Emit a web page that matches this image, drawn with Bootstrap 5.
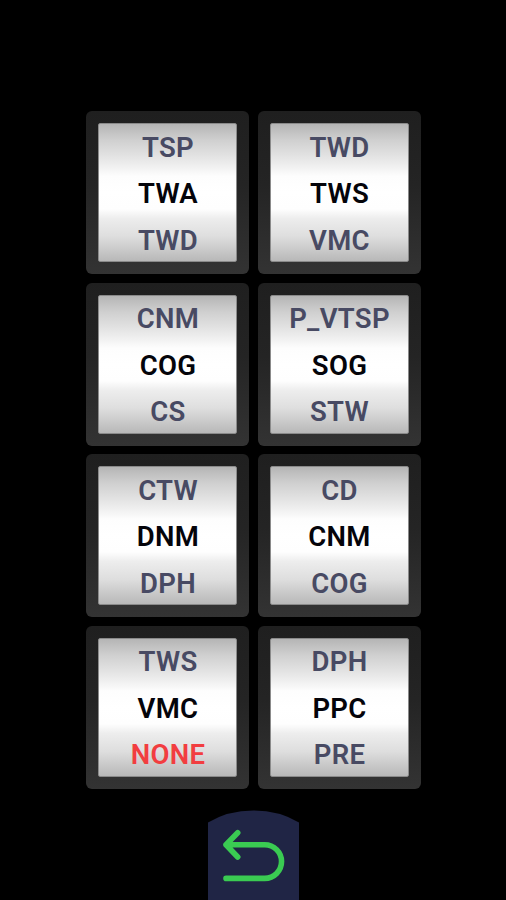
<!DOCTYPE html>
<html lang="en">
<head>
<meta charset="utf-8">
<meta name="viewport" content="width=device-width, initial-scale=1">
<title>Display selection</title>
<link href="https://cdn.jsdelivr.net/npm/bootstrap@5.3.0/dist/css/bootstrap.min.css" rel="stylesheet">
<style>
body { background: #000; font-family: Roboto, "Liberation Sans", sans-serif; }
.screen { height: 900px; padding-top: 111px; }
.wheels { display: grid; grid-template-columns: 163px 163px; gap: 8.5px; margin-left: 86px; }
.wheel { height: 163px; padding: 12px; border-radius: 6px; background: linear-gradient(#1f1f1f, #242424 45%, #333); }
.face { height: 139px; padding: .5px 0 0 1px; border: 1px solid #8a8a8a; border-radius: 2px;
  background: linear-gradient(#b5b5b5 0%, #d0d0d0 12%, #e2e2e2 23%, #f0f0f0 31%, #fdfdfd 38%, #fff 50%, #fefefe 62%, #ededed 69%, #dedede 82%, #b8b8b8 100%); }
.opt { height: 46.5px; line-height: 46.5px; font-size: 27.5px; font-weight: 600; letter-spacing: .3px; color: #484a63; white-space: nowrap; }
.opt.picked { color: #04040a; }
.opt.none { color: #f23d40; }
.back { width: 91px; height: 90px; margin-left: 208px; }
</style>
</head>
<body>
<main class="screen d-flex flex-column justify-content-between overflow-hidden">
  <div class="wheels text-center">
    <div class="wheel"><div class="face"><div class="opt">TSP</div><div class="opt picked">TWA</div><div class="opt">TWD</div></div></div>
    <div class="wheel"><div class="face"><div class="opt">TWD</div><div class="opt picked">TWS</div><div class="opt">VMC</div></div></div>
    <div class="wheel"><div class="face"><div class="opt">CNM</div><div class="opt picked">COG</div><div class="opt">CS</div></div></div>
    <div class="wheel"><div class="face"><div class="opt">P_VTSP</div><div class="opt picked">SOG</div><div class="opt">STW</div></div></div>
    <div class="wheel"><div class="face"><div class="opt">CTW</div><div class="opt picked">DNM</div><div class="opt">DPH</div></div></div>
    <div class="wheel"><div class="face"><div class="opt">CD</div><div class="opt picked">CNM</div><div class="opt">COG</div></div></div>
    <div class="wheel"><div class="face"><div class="opt">TWS</div><div class="opt picked">VMC</div><div class="opt none">NONE</div></div></div>
    <div class="wheel"><div class="face"><div class="opt">DPH</div><div class="opt picked">PPC</div><div class="opt">PRE</div></div></div>
  </div>
  <button class="back btn p-0 border-0 rounded-0 d-block" aria-label="Back">
    <svg class="d-block" width="91" height="90" viewBox="0 0 91 90">
      <path d="M0 90V12.500Q20 .5 45.500 .5T91 12.500V90Z" fill="#202545"/>
      <path d="M18 68.400H56.700A16.800 16.800 0 0 0 56.700 34.700H18M29.700 22.700L18 34.700L29.700 47" fill="none" stroke="#3acb52" stroke-width="5.600" stroke-linecap="round" stroke-linejoin="round"/>
    </svg>
  </button>
</main>
<script src="https://cdn.jsdelivr.net/npm/bootstrap@5.3.0/dist/js/bootstrap.bundle.min.js"></script>
</body>
</html>
